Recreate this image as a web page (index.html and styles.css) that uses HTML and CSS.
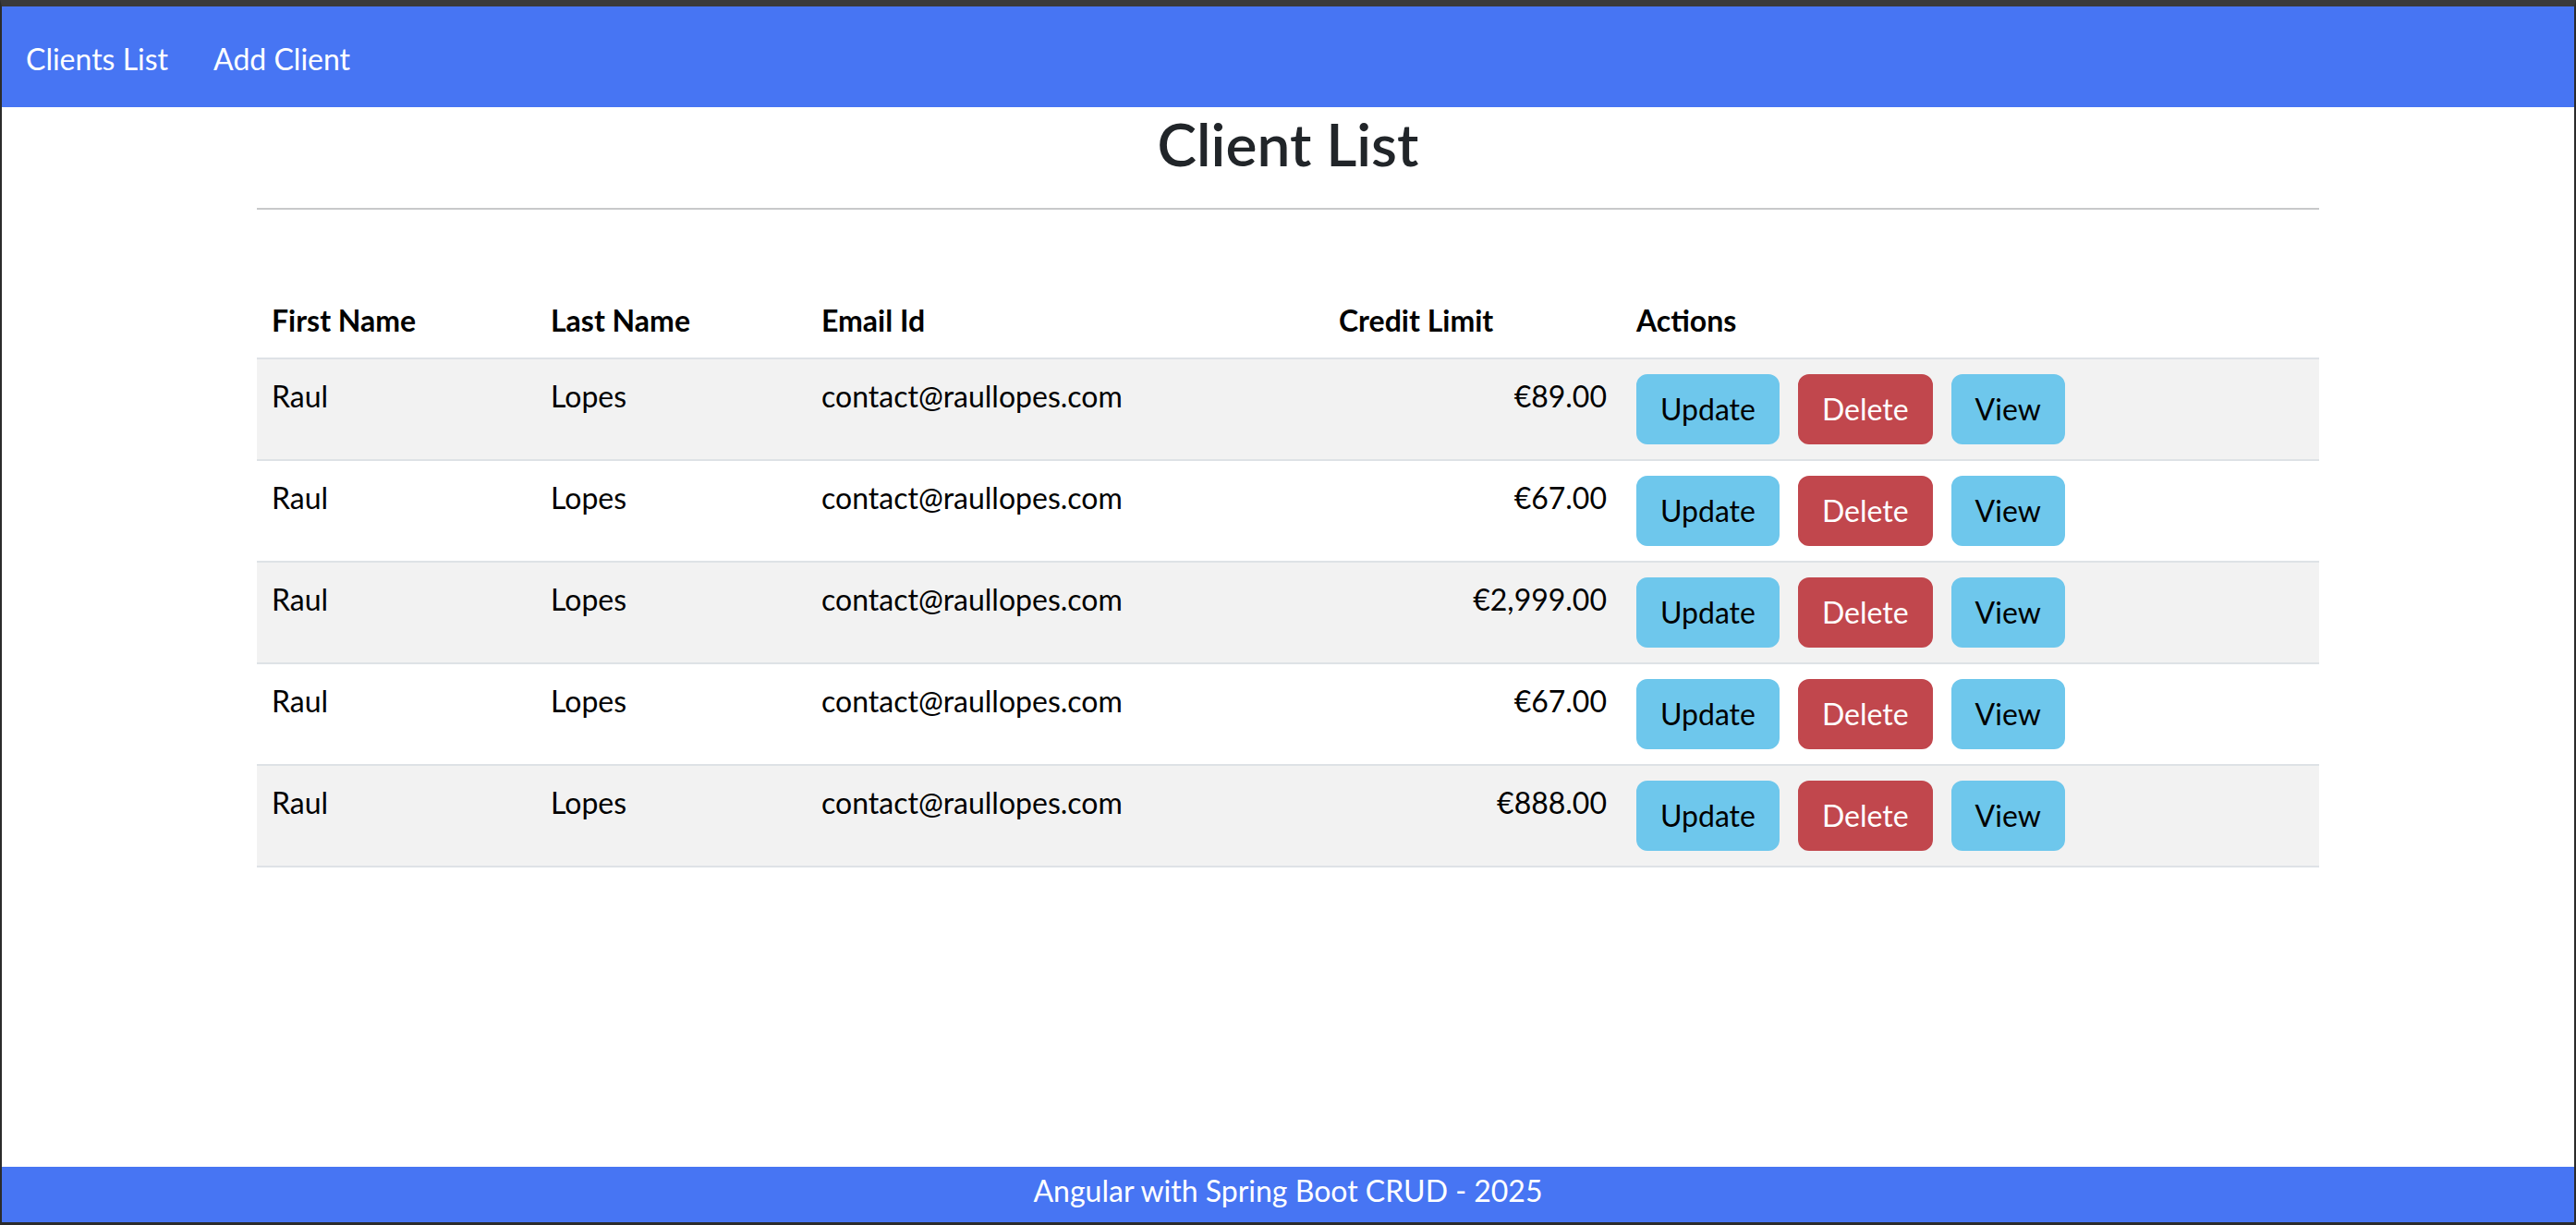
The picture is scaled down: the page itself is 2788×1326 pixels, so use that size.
FILE: index.html
```html
<!DOCTYPE html>
<html lang="en">
<head>
<meta charset="utf-8">
<title>Client List</title>
<link rel="stylesheet" href="styles.css">
</head>
<body>
<div class="frame">
  <nav class="navbar">
    <a class="nav-link" href="#">Clients List</a>
    <a class="nav-link" href="#">Add Client</a>
  </nav>
  <main class="main">
    <div class="container">
      <h2 class="title">Client List</h2>
      <hr class="divider">
      <table class="clients">
        <colgroup>
          <col class="c-first">
          <col class="c-last">
          <col class="c-email">
          <col class="c-credit">
          <col class="c-actions">
        </colgroup>
        <thead>
          <tr>
            <th>First Name</th>
            <th>Last Name</th>
            <th>Email Id</th>
            <th>Credit Limit</th>
            <th>Actions</th>
          </tr>
        </thead>
        <tbody>
          <tr>
            <td>Raul</td><td>Lopes</td><td>contact@raullopes.com</td><td class="num">€89.00</td>
            <td><div class="actions"><button class="btn btn-info">Update</button><button class="btn btn-danger">Delete</button><button class="btn btn-info">View</button></div></td>
          </tr>
          <tr>
            <td>Raul</td><td>Lopes</td><td>contact@raullopes.com</td><td class="num">€67.00</td>
            <td><div class="actions"><button class="btn btn-info">Update</button><button class="btn btn-danger">Delete</button><button class="btn btn-info">View</button></div></td>
          </tr>
          <tr>
            <td>Raul</td><td>Lopes</td><td>contact@raullopes.com</td><td class="num">€2,999.00</td>
            <td><div class="actions"><button class="btn btn-info">Update</button><button class="btn btn-danger">Delete</button><button class="btn btn-info">View</button></div></td>
          </tr>
          <tr>
            <td>Raul</td><td>Lopes</td><td>contact@raullopes.com</td><td class="num">€67.00</td>
            <td><div class="actions"><button class="btn btn-info">Update</button><button class="btn btn-danger">Delete</button><button class="btn btn-info">View</button></div></td>
          </tr>
          <tr>
            <td>Raul</td><td>Lopes</td><td>contact@raullopes.com</td><td class="num">€888.00</td>
            <td><div class="actions"><button class="btn btn-info">Update</button><button class="btn btn-danger">Delete</button><button class="btn btn-info">View</button></div></td>
          </tr>
        </tbody>
      </table>
    </div>
  </main>
  <footer class="footer">Angular with Spring Boot CRUD - 2025</footer>
</div>
</body>
</html>
```

FILE: styles.css
```css
html, body {
  margin: 0;
  padding: 0;
}

body {
  background: #2b2b2b;
  font-family: Lato, "Open Sans", "Noto Sans", sans-serif;
}

.frame {
  height: 1326px;
  box-sizing: border-box;
  border-top: 7px solid #3a3a3a;
  border-left: 2px solid #2b2b2b;
  border-right: 2px solid #2b2b2b;
  border-bottom: 3px solid #2b2b2b;
  background: #ffffff;
  display: flex;
  flex-direction: column;
}

.navbar {
  flex: none;
  height: 109px;
  box-sizing: border-box;
  background: #4775f3;
  display: flex;
  align-items: flex-start;
  gap: 49px;
  padding: 33px 0 0 26px;
}

.nav-link {
  color: #ffffff;
  font-size: 32px;
  line-height: 48px;
  text-decoration: none;
}

.main {
  flex: 1;
}

.container {
  width: 2232px;
  margin: 0 auto;
}

.title {
  margin: 2px 0 30px;
  font-size: 64px;
  font-weight: 600;
  line-height: 76.8px;
  text-align: center;
  color: #212529;
}

.divider {
  margin: 0 0 80px;
  border: 0;
  border-top: 2px solid #c8c9ca;
  height: 0;
}

.clients {
  width: 100%;
  table-layout: fixed;
  border-collapse: separate;
  border-spacing: 0;
  font-size: 32px;
  line-height: 48px;
  color: #000000;
}

.c-first { width: 302px; }
.c-last { width: 293px; }
.c-email { width: 560px; }
.c-credit { width: 322px; }
.c-actions { width: 755px; }

.clients th,
.clients td {
  padding: 16px;
  border-bottom: 2px solid #dee2e6;
  text-align: left;
  vertical-align: top;
  white-space: nowrap;
}

.clients th {
  font-weight: 700;
}

.clients td.num {
  text-align: right;
}

.clients tbody tr:nth-child(odd) td {
  background: #f2f2f2;
}

.actions {
  display: flex;
  gap: 20px;
}

.btn {
  font-family: inherit;
  font-size: 32px;
  line-height: 48px;
  padding: 12px 24px;
  border: 2px solid transparent;
  border-radius: 12px;
  cursor: pointer;
}

.btn-info {
  background: #6ec7ec;
  border-color: #6ec7ec;
  color: #000000;
}

.btn-danger {
  background: #c1474d;
  border-color: #c1474d;
  color: #ffffff;
}

.footer {
  flex: none;
  height: 60px;
  box-sizing: border-box;
  padding-top: 2px;
  background: #4775f3;
  color: #ffffff;
  text-align: center;
  font-size: 32px;
  line-height: 48px;
}
```
